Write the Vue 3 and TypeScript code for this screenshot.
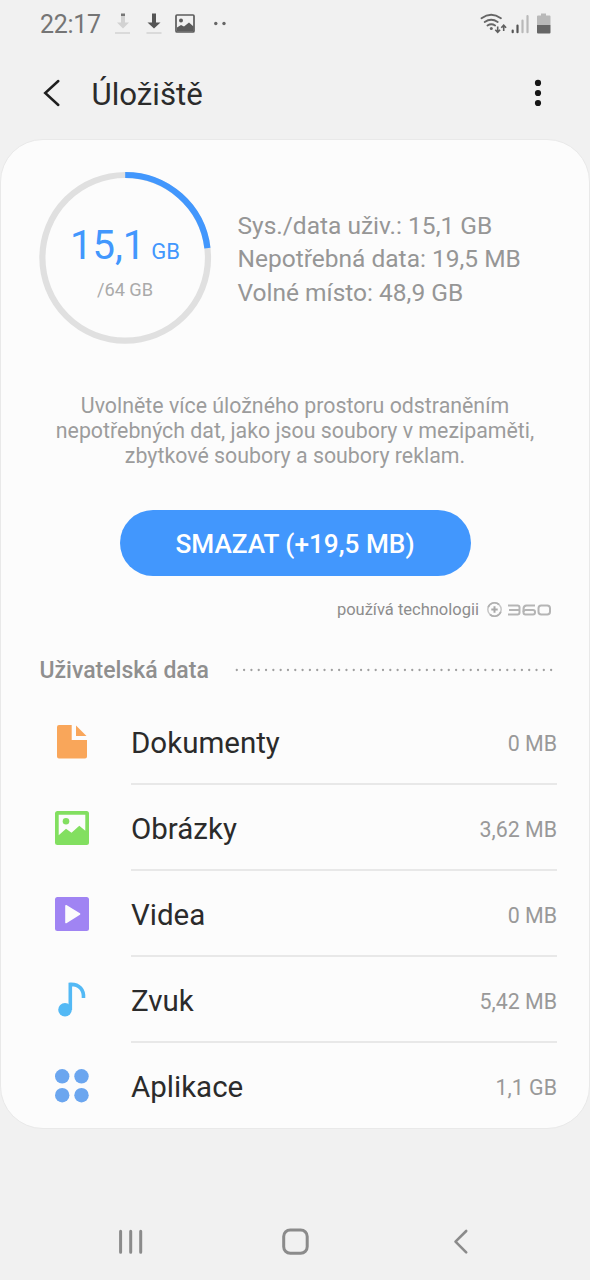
<script setup lang="ts">
interface Category {
  id: 'documents' | 'images' | 'videos' | 'audio' | 'apps'
  name: string
  size: string
}

const stats: string[] = [
  'Sys./data uživ.: 15,1 GB',
  'Nepotřebná data: 19,5 MB',
  'Volné místo: 48,9 GB',
]

const description: string[] = [
  'Uvolněte více úložného prostoru odstraněním',
  'nepotřebných dat, jako jsou soubory v mezipaměti,',
  'zbytkové soubory a soubory reklam.',
]

const categories: Category[] = [
  { id: 'documents', name: 'Dokumenty', size: '0 MB' },
  { id: 'images', name: 'Obrázky', size: '3,62 MB' },
  { id: 'videos', name: 'Videa', size: '0 MB' },
  { id: 'audio', name: 'Zvuk', size: '5,42 MB' },
  { id: 'apps', name: 'Aplikace', size: '1,1 GB' },
]

const usedPercent = 23.1
</script>

<template>
  <div class="screen">
    <header class="status">
      <span class="clock">22:17</span>
      <svg class="status-left" width="120" height="26" viewBox="110 10 120 26">
        <path d="M121 16h4v6.500h4l-6 6-6-6h4z" fill="#d2d2d2" />
        <path d="M121 13.500h4v2.500h-4z" fill="#777" />
        <path d="M115 33h15" stroke="#d5d5d5" stroke-width="1.600" />
        <path d="M152 13.500h4v9h4.500l-6.500 6-6.500-6h4.500z" fill="#555" />
        <path d="M146.500 33h15" stroke="#d5d5d5" stroke-width="1.600" />
        <rect x="176" y="15" width="18" height="17" rx="1" fill="none" stroke="#5c5c5c" stroke-width="1.700" />
        <circle cx="181" cy="20.500" r="2" fill="#5c5c5c" />
        <path d="M177 27.500l4-2.500 3 1.500 5-4 4.500 4V31.500H177z" fill="#5c5c5c" />
        <circle cx="215.800" cy="23.500" r="1.700" fill="#666" />
        <circle cx="224" cy="23.500" r="1.700" fill="#666" />
      </svg>
      <svg class="status-right" width="74" height="26" viewBox="478 10 74 26">
        <g fill="none" stroke="#666" stroke-width="1.900" stroke-linecap="round">
          <path d="M481.500 18.300q9.700-7 19.400 0" />
          <path d="M484.700 22q6.500-4.500 13 0" />
          <path d="M487.500 25.500q3.800-2.600 7.600 0" />
        </g>
        <circle cx="491.300" cy="28.400" r="1.500" fill="#666" />
        <g fill="none" stroke="#606060" stroke-width="1.600">
          <path d="M497.700 26.500v5.500M495.300 29.800l2.400 2.500 2.400-2.500" />
          <path d="M503.700 31v-5.500M501.300 27.700l2.400-2.500 2.400 2.500" />
        </g>
        <g stroke-width="2.200" stroke-linecap="round">
          <path d="M512.700 30.500v1.700M517.500 25.500v6.700" stroke="#555" />
          <path d="M522.500 20.500v11.700M527.500 16v16.200" stroke="#b9b9b9" />
        </g>
        <path d="M541 13.500h5v2h3.500q1 0 1 1V25H537v-8.500q0-1 1-1h3z" fill="#b9b9b9" />
        <path d="M537 25h13.500v7.500q0 1-1 1H538q-1 0-1-1z" fill="#666" />
      </svg>
    </header>

    <nav class="appbar">
      <svg width="20" height="30" viewBox="42 78 20 30">
        <path d="M58.300 81L45.200 93l13.100 12" fill="none" stroke="#1f1f1f" stroke-width="2.500" stroke-linecap="round" />
      </svg>
      <h1>Úložiště</h1>
      <svg width="10" height="30" viewBox="532.500 78 10 30">
        <circle cx="537.500" cy="82.900" r="3.100" fill="#161616" />
        <circle cx="537.500" cy="93" r="3.100" fill="#161616" />
        <circle cx="537.500" cy="103" r="3.100" fill="#161616" />
      </svg>
    </nav>

    <main class="card">
      <section class="summary">
        <div class="gauge">
          <svg class="ring" width="174" height="174" viewBox="0 0 174 174">
            <circle cx="87.200" cy="86.800" r="82.800" fill="none" stroke="#e0e0e0" stroke-width="6.200" />
            <circle
              cx="87.200"
              cy="86.800"
              r="82.800"
              fill="none"
              stroke="#4297fd"
              stroke-width="6.200"
              pathLength="100"
              :stroke-dasharray="`${usedPercent} 100`"
              transform="rotate(-90 87.200 86.800)"
            />
          </svg>
          <div class="used"><span class="used-value">15,1</span><span class="used-unit">GB</span></div>
          <div class="total">/64 GB</div>
        </div>
        <ul class="stats">
          <li v-for="line in stats" :key="line">{{ line }}</li>
        </ul>
      </section>

      <p class="description">
        <span v-for="line in description" :key="line">{{ line }}</span>
      </p>

      <button class="clean" type="button">SMAZAT (+19,5 MB)</button>

      <div class="powered">
        <span>používá technologii</span>
        <svg width="66" height="18" viewBox="486 601 66 18">
          <circle cx="494.500" cy="610.500" r="6.700" fill="none" stroke="#c6c6c6" stroke-width="1.500" />
          <path d="M490 615.500a6.700 6.700 0 0 0 10.800-2.800M499 605.500a6.700 6.700 0 0 0-10.800 2.800" fill="none" stroke="#b0b0b0" stroke-width="1.700" />
          <path d="M494.500 607.300v6.400M491.300 610.500h6.400" stroke="#a8a8a8" stroke-width="2" />
          <g fill="none" stroke="#b5b5b5" stroke-width="2" stroke-linejoin="round">
            <path d="M508 606.500h9.500q2 0 2 2v5q0 2-2 2H508M509 611h10.500" />
            <path d="M535 606.500h-8.500q-3 0-3 3.500v3" />
            <rect x="523.500" y="611" width="11.500" height="4.500" rx="2" />
            <rect x="538.500" y="606.500" width="11.500" height="9" rx="2.800" />
          </g>
        </svg>
      </div>

      <div class="section">
        <h2>Uživatelská data</h2>
        <svg width="322" height="4" viewBox="235 0 322 4">
          <path d="M236.800 2H554" stroke="#a0a0a0" stroke-width="2.300" stroke-linecap="round" stroke-dasharray="0 7.310" />
        </svg>
      </div>

      <ul class="list">
        <li v-for="item in categories" :key="item.id" class="row">
          <svg class="icon" width="36" height="36" viewBox="0 0 36 36">
            <template v-if="item.id === 'documents'">
              <path d="M5 1h12.700v15H33v16.500q0 2-2 2H5q-2 0-2-2V3q0-2 2-2z" fill="#f9a65a" />
              <path d="M22 1.500l10.500 10.500H22z" fill="#f9a65a" />
            </template>
            <template v-else-if="item.id === 'images'">
              <rect x="1" y="1" width="34" height="34" rx="2.500" fill="#82df60" />
              <path d="M4.700 4.700h26.600v16l-6-5-7.800 7-5.500-4-7.300 6.500z" fill="#fcfcfc" />
              <circle cx="12" cy="11.300" r="3.300" fill="#82df60" />
            </template>
            <template v-else-if="item.id === 'videos'">
              <rect x="1" y="1" width="34" height="34" rx="2.500" fill="#a084f3" />
              <path d="M12 9.700L25.500 18 12 26.500z" fill="#fcfcfc" stroke="#fcfcfc" stroke-width="1.600" stroke-linejoin="round" />
            </template>
            <template v-else-if="item.id === 'audio'">
              <circle cx="11" cy="27.800" r="6.800" fill="#53b9f5" />
              <path d="M16.300 28V2.400C25.500 2 30 8 29.500 16" fill="none" stroke="#53b9f5" stroke-width="3.600" />
            </template>
            <g v-else fill="#6ba6ef">
              <circle cx="8.200" cy="8.300" r="7.200" />
              <circle cx="27.500" cy="8.300" r="7.200" />
              <circle cx="8.200" cy="27.200" r="7.200" />
              <circle cx="27.500" cy="27.200" r="7.200" />
            </g>
          </svg>
          <div class="row-body">
            <span class="name">{{ item.name }}</span>
            <span class="size">{{ item.size }}</span>
          </div>
        </li>
      </ul>
    </main>

    <footer class="navbar">
      <svg width="354" height="30" viewBox="116 1227 354 30" fill="none" stroke="#8b8b8b" stroke-width="3" stroke-linecap="round">
        <path d="M120.600 1231.200v21M130.700 1231.200v21M140.700 1231.200v21" />
        <rect x="283.700" y="1230" width="23.500" height="23.300" rx="6.500" />
        <path d="M466.200 1231L455.500 1241.700l10.700 10.700" stroke-width="2.600" stroke-linejoin="round" />
      </svg>
    </footer>
  </div>
</template>

<style>
body {
  background: #f1f1f1;
}
</style>

<style scoped>
.screen {
  box-sizing: border-box;
  display: flex;
  flex-direction: column;
  width: 590px;
  height: 1280px;
  overflow: hidden;
  background: #f1f1f1;
  color: #2b2b2b;
  font-family: Roboto, "Liberation Sans", sans-serif;
}
svg {
  display: block;
  flex: none;
}
ul {
  list-style: none;
  margin: 0;
  padding: 0;
}
.status {
  display: flex;
  align-items: center;
  height: 46px;
  padding: 0 38px 0 40px;
}
.clock {
  width: 70px;
  padding-top: 3px;
  font-size: 25px;
  line-height: 30px;
  letter-spacing: -0.3px;
  color: #757575;
}
.status-right {
  margin-left: auto;
}
.appbar {
  display: flex;
  align-items: center;
  height: 93px;
  padding: 0 47.500px 0 42px;
}
.appbar h1 {
  flex: 1;
  margin: 4px 0 0 29.500px;
  font-size: 31.200px;
  font-weight: 400;
  line-height: 40px;
  color: #2b2b2b;
}
.card {
  box-sizing: border-box;
  height: 990px;
  border: 1px solid #e9e9e9;
  border-radius: 43px;
  padding: 31px 32px 0 37px;
  background: #fcfcfc;
}
.summary {
  display: flex;
}
.gauge {
  display: grid;
  width: 174px;
  height: 174px;
  grid-template-rows: 52px 46px 41px 35px;
  justify-items: center;
}
.ring {
  grid-area: 1 / 1 / 5 / 2;
}
.used {
  grid-area: 2 / 1;
  display: flex;
  align-items: baseline;
  gap: 6px;
  line-height: 46px;
  color: #4297fd;
}
.used-value {
  font-size: 40px;
}
.used-unit {
  font-size: 22px;
}
.total {
  grid-area: 3 / 1;
  font-size: 18.200px;
  line-height: 42px;
  color: #aaa;
}
.stats {
  padding: 37.800px 0 0 25.500px;
  font-size: 24.500px;
  line-height: 33.400px;
  color: #969696;
  white-space: nowrap;
}
.description {
  display: flex;
  flex-direction: column;
  align-items: center;
  margin: 48px 0 0 -5px;
  font-size: 21.350px;
  line-height: 25.200px;
  color: #9c9c9c;
  white-space: nowrap;
}
.clean {
  display: block;
  width: 351px;
  height: 66px;
  margin: 41.500px 0 0 81.500px;
  border: 0;
  border-radius: 33px;
  padding: 2px 0 0;
  background: #4297fd;
  color: #fff;
  font: 500 26.200px/30px Roboto, "Liberation Sans", sans-serif;
}
.powered {
  display: flex;
  justify-content: flex-end;
  align-items: center;
  gap: 7px;
  height: 24px;
  margin: 21px 5px 0 0;
  font-size: 16.500px;
  color: #8d8d8d;
}
.section {
  display: flex;
  align-items: center;
  justify-content: space-between;
  height: 30px;
  margin: 34px 0 0 1.500px;
}
.section h2 {
  margin: 0;
  padding-top: 2px;
  font-size: 23px;
  font-weight: 500;
  line-height: 30px;
  color: #8f8f8f;
  white-space: nowrap;
}
.list {
  margin-top: 14px;
}
.row {
  display: flex;
  height: 86px;
}
.icon {
  margin: 25px 41px 0 16px;
}
.row-body {
  box-sizing: border-box;
  display: flex;
  flex: 1;
  align-items: center;
  justify-content: space-between;
  padding-top: 4.500px;
  border-bottom: 2px solid #e8e8e8;
}
.row:last-child .row-body {
  border-color: transparent;
}
.name {
  font-size: 29.500px;
}
.size {
  font-size: 21.400px;
  color: #999;
}
.navbar {
  display: flex;
  padding: 98px 0 0 116px;
}
</style>
